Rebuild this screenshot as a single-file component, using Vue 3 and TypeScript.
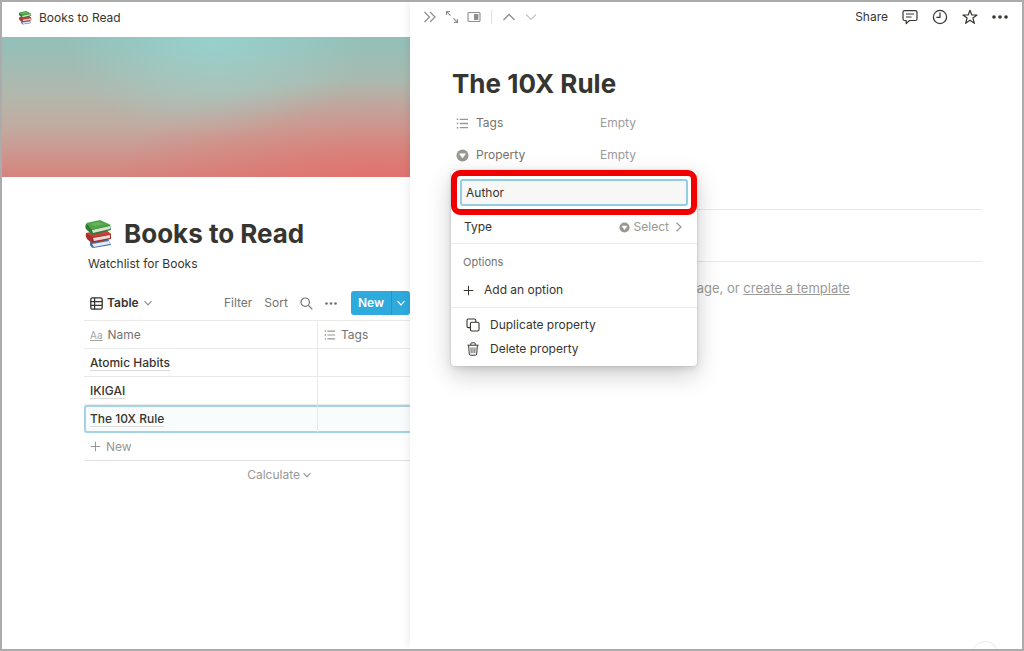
<script setup lang="ts">
import { ref } from 'vue'

interface Book {
  name: string
  selected: boolean
}

const books = ref<Book[]>([
  { name: 'Atomic Habits', selected: false },
  { name: 'IKIGAI', selected: false },
  { name: 'The 10X Rule', selected: true },
])
const propertyName = ref('Author')
</script>

<template>
  <div class="app">
    <svg class="defs" width="0" height="0" aria-hidden="true">
      <symbol id="books" viewBox="0 0 28 29">
        <path d="M6 22 L24 19 L27 25 L9 28 Q5 26 6 22Z" fill="#3d6ea8" />
        <path d="M8 24 L25 21 L26 24 L10 27Z" fill="#e6e9ee" />
        <path d="M5 21 L22 18 L25 20 L9 23Z" fill="#4b7db5" />
        <path d="M2 13 L23 11 L27 14 L27 19 L9 23 Q0 19 2 13Z" fill="#a8302a" />
        <path d="M9 18 L26 15 L26 18 L10 21Z" fill="#e8dcd9" />
        <path d="M2 13 L22 10 L27 14 L9 17Z" fill="#c9403a" />
        <path d="M2 4 Q0 8 4 11 L9 15 L27 10 L26 5Z" fill="#2f7a35" />
        <path d="M8 10 L26 6 L26 9 L9 13Z" fill="#d5e3cf" />
        <path d="M2 3 L16 0 L27 5 L8 10Z" fill="#4fa548" />
        <path d="M6 4 L14 2 L20 4 L11 6Z" fill="#67b45b" />
      </symbol>
      <symbol id="list" viewBox="0 0 14 14">
        <path d="M4 2.5H13M4 7H13M4 11.5H13" stroke="currentColor" stroke-width="1.4" fill="none" />
        <path d="M.8 2.5H2.4M.8 7H2.4M.8 11.5H2.4" stroke="currentColor" stroke-width="1.6" fill="none" />
      </symbol>
      <symbol id="select" viewBox="0 0 14 14">
        <circle cx="7" cy="7" r="6.5" fill="currentColor" />
        <path d="M3.8 5.2H10.2L7 9.8Z" fill="#fff" stroke="#fff" stroke-width=".6" stroke-linejoin="round" />
      </symbol>
      <symbol id="down" viewBox="0 0 10 10">
        <path d="M1.5 3.2L5 6.8L8.5 3.2" stroke="currentColor" stroke-width="1.2" fill="none" />
      </symbol>
      <symbol id="plus" viewBox="0 0 12 12">
        <path d="M6 .8V11.2M.8 6H11.2" stroke="currentColor" stroke-width="1.1" fill="none" />
      </symbol>
      <symbol id="dots" viewBox="0 0 16 6">
        <circle cx="2" cy="3" r="1.8" fill="currentColor" />
        <circle cx="8" cy="3" r="1.8" fill="currentColor" />
        <circle cx="14" cy="3" r="1.8" fill="currentColor" />
      </symbol>
    </svg>

    <main class="page">
      <header class="crumb">
        <svg width="14" height="14"><use href="#books" /></svg>
        <span>Books to Read</span>
      </header>
      <div class="cover"></div>
      <div class="body">
        <h1 class="heading">
          <svg width="28" height="29"><use href="#books" /></svg>
          <span>Books to Read</span>
        </h1>
        <p class="desc">Watchlist for Books</p>

        <div class="toolbar">
          <button class="view">
            <svg width="13" height="13" viewBox="0 0 13 13" fill="none" stroke="currentColor" stroke-width="1.3">
              <rect x=".8" y=".8" width="11.4" height="11.4" rx="1.6" />
              <path d="M.8 4.6H12.2M.8 8.4H12.2M4.6 .8V12.2" />
            </svg>
            <b>Table</b>
            <svg class="faint" width="10" height="10"><use href="#down" /></svg>
          </button>
          <div class="tools">
            <button>Filter</button>
            <button>Sort</button>
            <button aria-label="Search">
              <svg width="13" height="13" viewBox="0 0 13 13" fill="none" stroke="currentColor" stroke-width="1.2">
                <circle cx="5.2" cy="5.2" r="4.2" />
                <path d="M8.3 8.3L12.3 12.3" />
              </svg>
            </button>
            <button aria-label="More options">
              <svg width="12" height="5"><use href="#dots" /></svg>
            </button>
          </div>
          <div class="newgroup">
            <button class="new">New</button>
            <button class="newmore" aria-label="New from template">
              <svg width="10" height="10"><use href="#down" /></svg>
            </button>
          </div>
        </div>

        <table class="grid">
          <thead>
            <tr>
              <th class="namecol"><span class="cell"><u class="aa">Aa</u>Name</span></th>
              <th><span class="cell"><svg width="12" height="12"><use href="#list" /></svg>Tags</span></th>
            </tr>
          </thead>
          <tbody>
            <tr v-for="book in books" :key="book.name" :class="{ selected: book.selected }">
              <td><a class="title" href="#">{{ book.name }}</a></td>
              <td></td>
            </tr>
          </tbody>
        </table>
        <button class="addrow"><svg width="11" height="11"><use href="#plus" /></svg>New</button>
        <button class="calc">Calculate<svg width="10" height="10"><use href="#down" /></svg></button>
      </div>
    </main>

    <aside class="peek">
      <header class="bar">
        <div class="nav">
          <button aria-label="Close">
            <svg width="14" height="14" viewBox="0 0 14 14" fill="none" stroke="currentColor" stroke-width="1.2">
              <path d="M1.5 2L6.5 7L1.5 12M7 2L12 7L7 12" />
            </svg>
          </button>
          <button aria-label="Open as full page">
            <svg width="14" height="14" viewBox="0 0 14 14" fill="none" stroke="currentColor" stroke-width="1.1">
              <path d="M1.5 5V1.5H5M1.5 1.5L5.6 5.6M12.5 9V12.5H9M12.5 12.5L8.4 8.4" />
            </svg>
          </button>
          <button aria-label="Peek mode">
            <svg width="14" height="14" viewBox="0 0 14 14">
              <rect x="1" y="2.5" width="12" height="9" rx="1" fill="none" stroke="currentColor" stroke-width="1.1" />
              <rect x="7" y="4" width="4.4" height="6" fill="currentColor" />
            </svg>
          </button>
          <i class="sep"></i>
          <button aria-label="Previous page">
            <svg width="14" height="14" viewBox="0 0 14 14" fill="none" stroke="currentColor" stroke-width="1.3">
              <path d="M1.5 10L7 4.5L12.5 10" />
            </svg>
          </button>
          <button class="off" aria-label="Next page">
            <svg width="14" height="14" viewBox="0 0 14 14" fill="none" stroke="currentColor" stroke-width="1.2">
              <path d="M2 4.5L7 9.5L12 4.5" />
            </svg>
          </button>
        </div>
        <div class="actions">
          <button>Share</button>
          <button aria-label="Comments">
            <svg width="16" height="16" viewBox="0 0 16 16" fill="none" stroke="currentColor" stroke-width="1.2" stroke-linejoin="round">
              <path d="M2.5 1.6H13.5Q15 1.6 15 3.1V10Q15 11.5 13.5 11.5H7.5L4.2 14.6V11.5H2.5Q1 11.5 1 10V3.1Q1 1.6 2.5 1.6Z" />
              <path d="M4 5H12M4 8H9.5" />
            </svg>
          </button>
          <button aria-label="Updates">
            <svg width="16" height="16" viewBox="0 0 16 16" fill="none" stroke="currentColor" stroke-width="1.2">
              <circle cx="8" cy="8" r="6.6" />
              <path d="M8 3.6V8.4H4.4" />
            </svg>
          </button>
          <button aria-label="Favorite">
            <svg width="16" height="16" viewBox="0 0 16 16" fill="none" stroke="currentColor" stroke-width="1.2" stroke-linejoin="round">
              <path d="M8 1.2L9.8 6H15L10.9 9.1L12.4 14.3L8 11.3L3.6 14.3L5.1 9.1L1 6H6.2Z" />
            </svg>
          </button>
          <button aria-label="More">
            <svg width="16" height="6"><use href="#dots" /></svg>
          </button>
        </div>
      </header>

      <article class="content">
        <h2 class="doctitle">The 10X Rule</h2>
        <div class="props">
          <div class="prop">
            <span class="label"><svg width="13" height="13"><use href="#list" /></svg>Tags</span>
            <span class="empty">Empty</span>
          </div>
          <div class="prop">
            <span class="label"><svg width="13" height="13"><use href="#select" /></svg>Property</span>
            <span class="empty">Empty</span>

            <div class="menu">
              <div class="highlight">
                <input v-model="propertyName" type="text" aria-label="Property name" />
              </div>
              <button class="item type">
                Type
                <span class="value">
                  <svg width="11" height="11"><use href="#select" /></svg>
                  <span class="kind">Select</span>
                  <svg width="8" height="10" viewBox="0 0 8 10" fill="none" stroke="currentColor" stroke-width="1.2"><path d="M1.5 .8L6 5L1.5 9.2" /></svg>
                </span>
              </button>
              <div class="group">
                <div class="caption">Options</div>
                <button class="item add"><svg width="11" height="11"><use href="#plus" /></svg>Add an option</button>
              </div>
              <div class="group last">
                <button class="item">
                  <svg width="14" height="14" viewBox="0 0 14 14" fill="none" stroke="currentColor" stroke-width="1.1">
                    <rect x="4.4" y="4.2" width="8.6" height="8.8" rx="1.4" />
                    <path d="M4.4 9.6H2.4Q1 9.6 1 8.2V2.4Q1 1 2.4 1H8.4Q9.8 1 9.8 2.4V4.2" />
                  </svg>
                  Duplicate property
                </button>
                <button class="item">
                  <svg width="14" height="14" viewBox="0 0 14 14" fill="none" stroke="currentColor">
                    <path d="M1.4 3.2H12.6M4.8 3V1.6Q4.8 .8 5.6 .8H8.4Q9.2 .8 9.2 1.6V3M2.6 3.4L3.3 12Q3.4 13.2 4.5 13.2H9.5Q10.6 13.2 10.7 12L11.4 3.4" />
                    <path d="M5 5.4L5.2 11.2M7 5.4V11.2M9 5.4L8.8 11.2" stroke-width=".8" />
                  </svg>
                  Delete property
                </button>
              </div>
            </div>
          </div>
        </div>
        <div class="comments"></div>
        <p class="hint">Press Enter to continue with an empty page, or <a href="#">create a template</a></p>
      </article>
      <button class="help" aria-label="Help"></button>
    </aside>
  </div>
</template>

<style>
body {
  margin: 0;
}
</style>

<style scoped>
.app,
.app * {
  box-sizing: border-box;
}
.app {
  display: grid;
  grid-template-columns: 2fr 3fr;
  min-height: 100vh;
  border: 2px solid #ababab;
  background: #fff;
  color: #37352f;
  font: 12px/20px Inter, "Liberation Sans", sans-serif;
  overflow: hidden;
}
.defs {
  position: absolute;
}
svg {
  display: block;
  flex: none;
}
button {
  display: flex;
  align-items: center;
  padding: 0;
  border: 0;
  background: none;
  color: inherit;
  font: inherit;
}
.page {
  min-width: 0;
  overflow: hidden;
}
.crumb {
  display: flex;
  align-items: center;
  gap: 7px;
  height: 35px;
  padding: 0 16px 3px;
}
.cover {
  height: 140px;
  background:
    radial-gradient(ellipse at 52% 0, rgba(155, 220, 218, .6), transparent 50%),
    radial-gradient(ellipse at 92% 100%, rgba(232, 104, 100, .65), transparent 50%),
    linear-gradient(#91c0b9, #b1b8ad 40%, #c2aaa0 65%, #d6837d);
}
.body {
  padding: 39px 0 0 82px;
}
.heading {
  display: flex;
  align-items: center;
  gap: 12px;
  margin: 0;
  font-size: 26px;
  line-height: 36px;
  font-weight: 700;
  white-space: nowrap;
}
.desc {
  margin: 2px 0 0 4px;
}
.toolbar {
  display: flex;
  align-items: center;
  height: 24px;
  margin-top: 17px;
  padding-left: 6px;
}
.view {
  gap: 4px;
}
.view b {
  font-weight: 600;
}
.faint {
  color: #918f8b;
}
.tools {
  display: flex;
  align-items: center;
  gap: 12px;
  margin: 0 14px 0 auto;
  color: #75736f;
}
.newgroup {
  display: flex;
  height: 24px;
  border-radius: 3px;
  overflow: hidden;
  background: #2eaadc;
  color: #fff;
}
.new {
  padding: 0 7px;
  font-weight: 600;
}
.newmore {
  padding: 0 4px;
  border-left: 1px solid #2794c1;
}
.grid {
  width: 100%;
  margin-top: 5px;
  border-collapse: separate;
  border-spacing: 0;
  table-layout: fixed;
}
.grid th,
.grid td {
  height: 28px;
  padding: 0 6px;
  border-bottom: 1px solid #e9e9e7;
  text-align: left;
  font-weight: 400;
}
.grid th {
  height: 29px;
  border-top: 1px solid #e9e9e7;
  color: #75736f;
}
.grid th svg {
  color: #999792;
}
.grid th:first-child,
.grid td:first-child {
  border-right: 1px solid #e9e9e7;
}
.namecol {
  width: 234px;
}
.cell {
  display: flex;
  align-items: center;
  gap: 5px;
}
.aa {
  color: #a5a39f;
  font-size: 10px;
}
.grid .title {
  border-bottom: 1px solid #dcdbd9;
  color: inherit;
  font-weight: 500;
  text-decoration: none;
}
.grid .selected td {
  border-top: 2px solid #a4d3e5;
  border-bottom: 2px solid #a4d3e5;
  background: #f8fcfd;
}
.grid .selected td:first-child {
  border-left: 2px solid #a4d3e5;
  border-radius: 3px 0 0 3px;
  padding-left: 4px;
}
.addrow {
  width: 100%;
  height: 28px;
  gap: 5px;
  padding-left: 6px;
  border-bottom: 1px solid #e3e2e0;
  color: #999792;
}
.calc {
  justify-content: flex-end;
  width: 228px;
  height: 27px;
  gap: 2px;
  color: #999792;
}
.peek {
  position: relative;
  min-width: 0;
  background: #fff;
  box-shadow: 0 0 10px rgba(15, 15, 15, .1);
}
.bar {
  display: flex;
  align-items: center;
  justify-content: space-between;
  height: 30px;
  padding: 0 14px 0 13px;
}
.nav,
.actions {
  display: flex;
  align-items: center;
}
.nav {
  gap: 8px;
  color: #8f8d89;
}
.off {
  color: #c6c5c2;
}
.sep {
  width: 1px;
  height: 14px;
  margin: 0 2px;
  background: #e3e2e0;
}
.actions {
  gap: 14px;
}
.content {
  padding: 34px 40px 0 42px;
}
.doctitle {
  margin: 0;
  font-size: 26px;
  line-height: 36px;
  font-weight: 700;
}
.props {
  display: grid;
  gap: 4px;
  margin-top: 7px;
}
.prop {
  position: relative;
  display: flex;
  align-items: center;
  height: 28px;
  color: #75736f;
}
.label {
  display: flex;
  align-items: center;
  gap: 7px;
  width: 148px;
  padding-left: 4px;
}
.label svg {
  color: #999792;
}
.empty {
  color: #9d9b97;
}
.menu {
  position: absolute;
  top: 29px;
  left: -1px;
  width: 246px;
  border-radius: 4px;
  background: #fff;
  color: #37352f;
  box-shadow: 0 0 0 1px rgba(15, 15, 15, .05), 0 3px 6px rgba(15, 15, 15, .1), 0 9px 24px rgba(15, 15, 15, .2);
}
.highlight {
  padding: 3px;
  border: 6px solid #f00000;
  border-radius: 9px;
}
.highlight input {
  display: block;
  width: 100%;
  height: 27px;
  padding: 0 4px;
  border: 2px solid #94cde3;
  border-radius: 3px;
  outline: 0;
  background: #f7f7f6;
  color: inherit;
  font: inherit;
}
.item {
  width: 100%;
  height: 24px;
  gap: 10px;
  padding: 0 15px;
}
.item.type {
  justify-content: space-between;
  height: 28px;
  padding: 0 14px 4px 13px;
}
.value {
  display: flex;
  align-items: center;
  gap: 4px;
  color: #999792;
}
.kind {
  padding-right: 2px;
}
.group {
  padding: 8px 0 5px;
  border-top: 1px solid #ebebea;
}
.caption {
  padding: 0 12px;
  color: #75736f;
  font-size: 11px;
}
.item.add {
  height: 30px;
  padding: 6px 12px 0;
}
.group.last {
  padding: 5px 0;
}
.comments {
  height: 53px;
  margin-top: 40px;
  border: solid #e9e9e7;
  border-width: 1px 0;
}
.hint {
  margin: 16px 0 0;
  color: #9b9a97;
  font-size: 13px;
  white-space: nowrap;
}
.hint a {
  color: inherit;
}
.help {
  position: absolute;
  right: 23px;
  bottom: -20px;
  width: 28px;
  height: 28px;
  border: 1px solid #e9e9e7;
  border-radius: 50%;
}
</style>
